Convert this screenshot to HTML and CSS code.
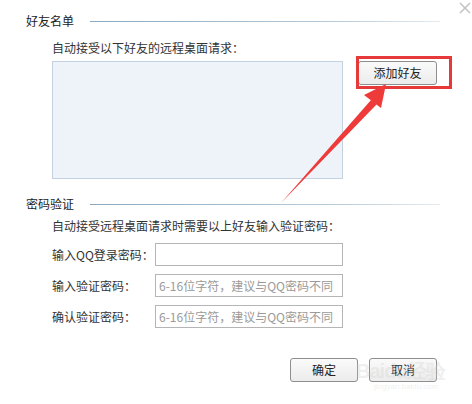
FILE: index.html
```html
<!DOCTYPE html>
<html>
<head>
<meta charset="utf-8">
<link rel="stylesheet" href="styles.css">
</head>
<body>
<div class="dialog">
  <svg class="close" width="12" height="12" viewBox="0 0 12 12"><path d="M1 1L11 11M11 1L1 11" stroke="#c4c4c4" stroke-width="1.6"/></svg>

  <div class="sec-head sec1"><span>好友名单</span><i class="rule"></i></div>
  <div class="desc d1">自动接受以下好友的远程桌面请求：</div>
  <div class="list-row">
    <div class="list-box"></div>
    <div class="add-wrap"><button class="btn add">添加好友</button><div class="hl"></div></div>
  </div>

  <div class="sec-head sec2"><span>密码验证</span><i class="rule"></i></div>
  <div class="desc d2">自动接受远程桌面请求时需要以上好友输入验证密码：</div>
  <div class="form">
    <div class="frow"><label>输入QQ登录密码：</label><div class="inp"></div></div>
    <div class="frow"><label>输入验证密码：</label><div class="inp ph">6-16位字符，建议与QQ密码不同</div></div>
    <div class="frow"><label>确认验证密码：</label><div class="inp ph">6-16位字符，建议与QQ密码不同</div></div>
  </div>

  <div class="footer">
    <button class="btn ok">确定</button>
    <button class="btn cancel">取消</button>
  </div>

  <div class="wm"><span class="wm1">Bai<b>du</b>经验</span><span class="wm2">jingyan.baidu.com</span></div>

  <svg class="arrow" width="472" height="404" viewBox="0 0 472 404">
    <polygon points="281,203 371,100 377,104" fill="#ef3a3a"/>
    <polygon points="386,84 364,95 381,108" fill="#ef3a3a"/>
  </svg>
</div>
</body>
</html>
```

FILE: styles.css
```css
* { box-sizing: border-box; }
html, body { margin: 0; padding: 0; background: #fff; }
body {
  width: 472px; height: 404px; overflow: hidden;
  font-family: "Noto Sans CJK SC", "Microsoft YaHei", sans-serif;
  font-size: 12px; color: #333;
}
.dialog { position: relative; width: 472px; height: 404px; padding: 12px 32px 0 26px; }
.close { position: absolute; left: 459px; top: 2px; }
.sec-head { display: flex; align-items: center; height: 18px; line-height: 18px; }
.sec-head span { color: #222; }
.rule {
  flex: 1; height: 1px; margin-left: 16px;
  background: linear-gradient(to right, #8aa8bf, #b8cad8 70%, #e4ecf2);
}
.desc { margin-left: 26px; height: 18px; line-height: 18px; color: #333; }
.d1 { margin-top: 9px; }
.list-row { display: flex; margin-left: 26px; margin-top: 4px; }
.list-box { width: 291px; height: 118px; background: #eef3f9; border: 1px solid #c3d1e0; }
.add-wrap { position: relative; margin-left: 15px; }
.btn {
  font-family: inherit; font-size: 12px; color: #222;
  background: linear-gradient(#fafafa, #ececec);
  border: 1px solid #8e8e8e; border-radius: 3px; padding: 0;
  height: 24px; line-height: 22px;
}
.add { width: 79px; }
.hl {
  position: absolute; left: -2px; top: -5px; width: 96px; height: 33px;
  border: 3px solid #e63a3a;
}
.sec2 { margin-top: 16px; }
.d2 { margin-top: 4px; }
.form { margin-left: 26px; margin-top: 8px; display: flex; flex-direction: column; gap: 8px; }
.frow { display: flex; align-items: center; height: 23px; }
.frow label { width: 103px; color: #333; }
.inp {
  width: 188px; height: 23px; border: 1px solid #b5b5b5; background: #fff;
  padding-left: 3px; line-height: 21px; color: #9a9a9a; white-space: nowrap;
}
.footer { display: flex; gap: 11px; margin-top: 30px; margin-left: 264px; }
.ok, .cancel { width: 68px; }
.wm {
  position: absolute; left: 356px; top: 360px; display: flex; flex-direction: column;
  color: rgba(210,210,210,0.35); pointer-events: none;
}
.wm1 { font-family: "Liberation Sans", sans-serif; font-size: 20px; line-height: 22px; font-weight: bold; letter-spacing: -1px; }
.wm1 b { font-weight: bold; }
.wm2 { font-family: "Liberation Sans", sans-serif; font-size: 8px; line-height: 10px; margin-left: 18px; }
.arrow { position: absolute; left: 0; top: 0; pointer-events: none; }
```
